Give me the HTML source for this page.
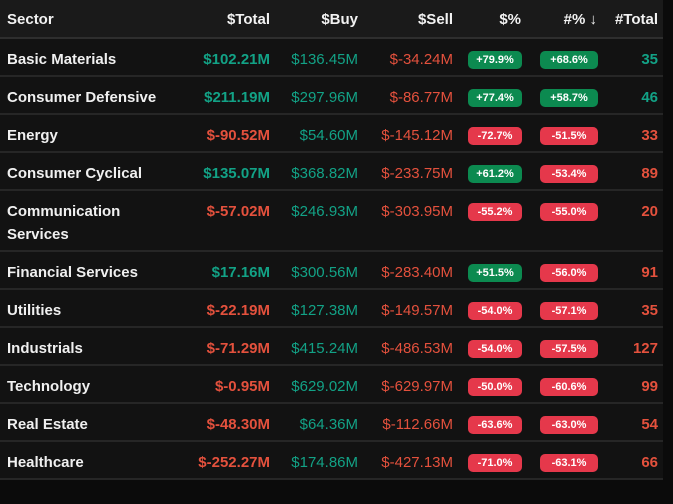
<!DOCTYPE html><html><head><style>
body{margin:0;background:#0b0b0b;width:673px;height:504px;overflow:hidden;font-family:"Liberation Sans",sans-serif;color:#eee}
.t{position:absolute;left:0;top:0;width:663px;background:#121212}
.r{position:relative;height:36px;border-bottom:2px solid #262626}
.h{background:#1a1a1a;height:37px;border-bottom:2px solid #2e2e2e}
.r div{position:absolute;top:13px;font-size:15px;line-height:16px}
.n{left:7px;font-weight:bold;color:#f0f0f0}
.a{right:393px;font-weight:bold}
.b{right:305px}
.s{right:210px}
.c{right:5px;font-weight:bold}
.h div{font-weight:bold;color:#f2f2f2;top:12px}
.g{color:#12a286}.d{color:#e4513d}
.bd{font-size:11px!important;font-weight:bold;color:#fff;border-radius:5px;height:18px;line-height:18px!important;text-align:center;top:12px!important}
.x{left:468px;width:54px}.y{left:540px;width:58px}
.bg{background:#0c8a50}.br{background:#e5384b}
.tall{height:59px}
</style></head><body><div class="t">
<div class="r h"><div class="n">Sector</div><div class="a">$Total</div><div class="b" style="font-weight:bold">$Buy</div><div class="s" style="font-weight:bold">$Sell</div><div style="right:142px">$%</div><div style="right:66px">#% ↓</div><div class="c">#Total</div></div>
<div class="r"><div class="n">Basic Materials</div><div class="a g">$102.21M</div><div class="b g">$136.45M</div><div class="s d">$-34.24M</div><div class="bd x bg">+79.9%</div><div class="bd y bg">+68.6%</div><div class="c g">35</div></div>
<div class="r"><div class="n">Consumer Defensive</div><div class="a g">$211.19M</div><div class="b g">$297.96M</div><div class="s d">$-86.77M</div><div class="bd x bg">+77.4%</div><div class="bd y bg">+58.7%</div><div class="c g">46</div></div>
<div class="r"><div class="n">Energy</div><div class="a d">$-90.52M</div><div class="b g">$54.60M</div><div class="s d">$-145.12M</div><div class="bd x br">-72.7%</div><div class="bd y br">-51.5%</div><div class="c d">33</div></div>
<div class="r"><div class="n">Consumer Cyclical</div><div class="a g">$135.07M</div><div class="b g">$368.82M</div><div class="s d">$-233.75M</div><div class="bd x bg">+61.2%</div><div class="bd y br">-53.4%</div><div class="c d">89</div></div>
<div class="r tall"><div class="n" style="line-height:23px;top:9px">Communication<br>Services</div><div class="a d">$-57.02M</div><div class="b g">$246.93M</div><div class="s d">$-303.95M</div><div class="bd x br">-55.2%</div><div class="bd y br">-55.0%</div><div class="c d">20</div></div>
<div class="r"><div class="n">Financial Services</div><div class="a g">$17.16M</div><div class="b g">$300.56M</div><div class="s d">$-283.40M</div><div class="bd x bg">+51.5%</div><div class="bd y br">-56.0%</div><div class="c d">91</div></div>
<div class="r"><div class="n">Utilities</div><div class="a d">$-22.19M</div><div class="b g">$127.38M</div><div class="s d">$-149.57M</div><div class="bd x br">-54.0%</div><div class="bd y br">-57.1%</div><div class="c d">35</div></div>
<div class="r"><div class="n">Industrials</div><div class="a d">$-71.29M</div><div class="b g">$415.24M</div><div class="s d">$-486.53M</div><div class="bd x br">-54.0%</div><div class="bd y br">-57.5%</div><div class="c d">127</div></div>
<div class="r"><div class="n">Technology</div><div class="a d">$-0.95M</div><div class="b g">$629.02M</div><div class="s d">$-629.97M</div><div class="bd x br">-50.0%</div><div class="bd y br">-60.6%</div><div class="c d">99</div></div>
<div class="r"><div class="n">Real Estate</div><div class="a d">$-48.30M</div><div class="b g">$64.36M</div><div class="s d">$-112.66M</div><div class="bd x br">-63.6%</div><div class="bd y br">-63.0%</div><div class="c d">54</div></div>
<div class="r"><div class="n">Healthcare</div><div class="a d">$-252.27M</div><div class="b g">$174.86M</div><div class="s d">$-427.13M</div><div class="bd x br">-71.0%</div><div class="bd y br">-63.1%</div><div class="c d">66</div></div>
</div></body></html>
